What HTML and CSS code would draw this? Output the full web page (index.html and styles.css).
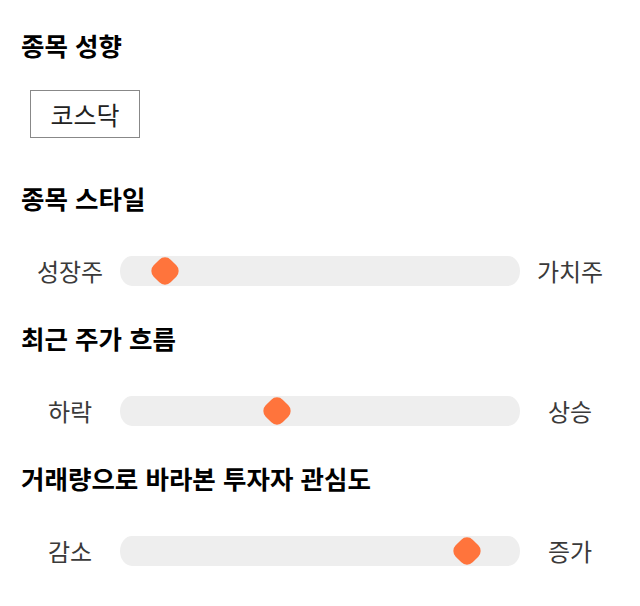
FILE: index.html
```html
<!DOCTYPE html>
<html lang="ko">
<head>
<meta charset="utf-8">
<link rel="stylesheet" href="styles.css">
</head>
<body>
<main class="panel">
  <section class="group">
    <h2 class="title">종목 성향</h2>
    <div class="chips"><span class="chip">코스닥</span></div>
  </section>
  <section class="group">
    <h2 class="title">종목 스타일</h2>
    <div class="slider-row">
      <span class="label">성장주</span>
      <div class="track"><span class="thumb" style="left: 11.25%"></span></div>
      <span class="label">가치주</span>
    </div>
  </section>
  <section class="group">
    <h2 class="title">최근 주가 흐름</h2>
    <div class="slider-row">
      <span class="label">하락</span>
      <div class="track"><span class="thumb" style="left: 39.25%"></span></div>
      <span class="label">상승</span>
    </div>
  </section>
  <section class="group">
    <h2 class="title">거래량으로 바라본 투자자 관심도</h2>
    <div class="slider-row">
      <span class="label">감소</span>
      <div class="track"><span class="thumb" style="left: 86.7%"></span></div>
      <span class="label">증가</span>
    </div>
  </section>
</main>
</body>
</html>
```
FILE: styles.css
```css
* { box-sizing: border-box; }
html, body { margin: 0; padding: 0; background: #fff; }
body {
  font-family: "Noto Sans CJK KR", "Noto Sans", sans-serif;
  color: #111;
}
.panel {
  padding: 27px 20px 0 21px;
  display: flex;
  flex-direction: column;
}
.group { display: flex; flex-direction: column; }
.title {
  margin: 0;
  font-size: 25.5px;
  line-height: 36px;
  font-weight: 700;
  color: #000;
}
.chips {
  display: flex;
  padding: 27px 0 0 9px;
  height: 117px;
}
.chip {
  display: inline-flex;
  align-items: center;
  justify-content: center;
  width: 110px;
  height: 48px;
  border: 1px solid #888;
  font-size: 25px;
  color: #222;
}
.slider-row {
  display: grid;
  grid-template-columns: 100px 1fr 100px;
  align-items: center;
  margin: 40px 0 34px -1px;
  height: 30px;
}
.label {
  text-align: center;
  font-size: 24px;
  color: #3a3a3a;
  line-height: 30px;
}
.track {
  position: relative;
  height: 30px;
  background: #eeeeee;
  border-radius: 12px / 15px;
}
.thumb {
  position: absolute;
  top: 50%;
  width: 24px;
  height: 24px;
  background: #ff743c;
  border-radius: 8px;
  transform: translate(-50%, -50%) rotate(45deg);
}
```
